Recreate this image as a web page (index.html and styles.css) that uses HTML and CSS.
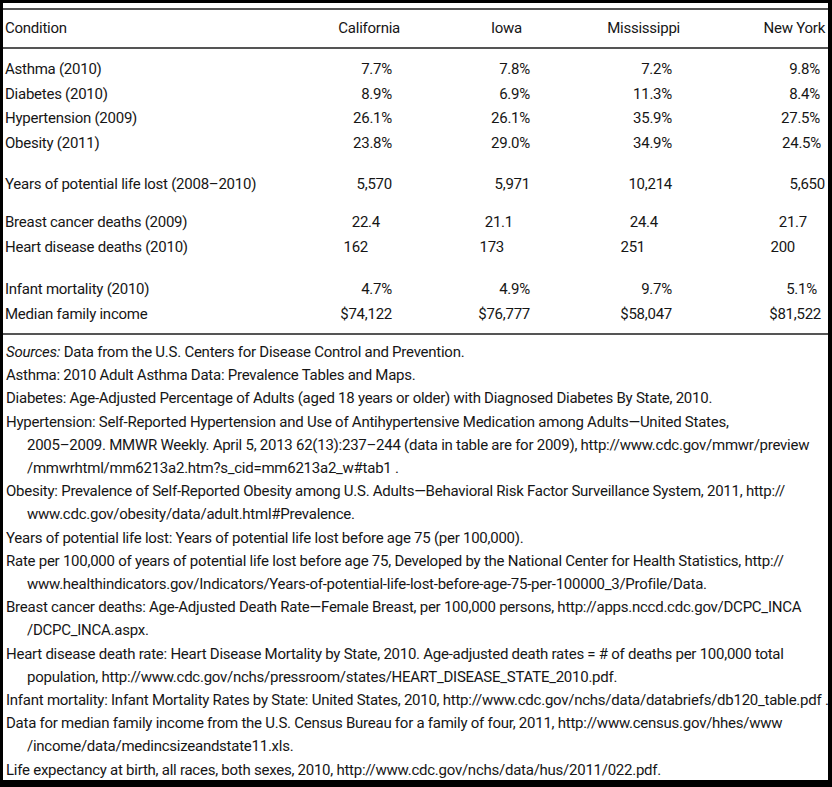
FILE: index.html
```html
<!DOCTYPE html>
<html>
<head>
<meta charset="utf-8">
<link rel="stylesheet" href="styles.css">
</head>
<body>
<div class="frame">
  <div class="table">
    <div class="row head">
      <div class="lab">Condition</div>
      <div class="val">California</div>
      <div class="val pr8">Iowa</div>
      <div class="val">Mississippi</div>
      <div class="val">New York</div>
    </div>
    <div class="body">
      <div class="row">
        <div class="lab">Asthma (2010)</div>
        <div class="val pr8">7.7%</div><div class="val">7.8%</div><div class="val pr8">7.2%</div><div class="val pr5">9.8%</div>
      </div>
      <div class="row">
        <div class="lab">Diabetes (2010)</div>
        <div class="val pr8">8.9%</div><div class="val">6.9%</div><div class="val pr8">11.3%</div><div class="val pr5">8.4%</div>
      </div>
      <div class="row">
        <div class="lab">Hypertension (2009)</div>
        <div class="val pr8">26.1%</div><div class="val">26.1%</div><div class="val pr8">35.9%</div><div class="val pr5">27.5%</div>
      </div>
      <div class="row">
        <div class="lab">Obesity (2011)</div>
        <div class="val pr8">23.8%</div><div class="val">29.0%</div><div class="val pr8">34.9%</div><div class="val pr4">24.5%</div>
      </div>
      <div class="row gap-a">
        <div class="lab">Years of potential life lost (2008–2010)</div>
        <div class="val pr8">5,570</div><div class="val">5,971</div><div class="val pr8">10,214</div><div class="val">5,650</div>
      </div>
      <div class="row gap-b">
        <div class="lab">Breast cancer deaths (2009)</div>
        <div class="val pr20">22.4</div><div class="val pr17">21.1</div><div class="val pr22">24.4</div><div class="val pr18">21.7</div>
      </div>
      <div class="row">
        <div class="lab">Heart disease deaths (2010)</div>
        <div class="val pr32">162</div><div class="val pr26">173</div><div class="val pr35">251</div><div class="val pr30">200</div>
      </div>
      <div class="row gap-c">
        <div class="lab">Infant mortality (2010)</div>
        <div class="val pr8">4.7%</div><div class="val">4.9%</div><div class="val pr8">9.7%</div><div class="val pr8">5.1%</div>
      </div>
      <div class="row">
        <div class="lab">Median family income</div>
        <div class="val pr8">$74,122</div><div class="val">$76,777</div><div class="val pr8">$58,047</div><div class="val pr4">$81,522</div>
      </div>
    </div>
  </div>
  <div class="notes">
    <div class="note"><i>Sources:</i> Data from the U.S. Centers for Disease Control and Prevention.</div>
    <div class="note">Asthma: 2010 Adult Asthma Data: Prevalence Tables and Maps.</div>
    <div class="note">Diabetes: Age-Adjusted Percentage of Adults (aged 18 years or older) with Diagnosed Diabetes By State, 2010.</div>
    <div class="note">Hypertension: Self-Reported Hypertension and Use of Antihypertensive Medication among Adults—United States,<br>2005–2009. MMWR Weekly. April 5, 2013 62(13):237–244 (data in table are for 2009), http://www.cdc.gov/mmwr/preview<br>/mmwrhtml/mm6213a2.htm?s_cid=mm6213a2_w#tab1 .</div>
    <div class="note">Obesity: Prevalence of Self-Reported Obesity among U.S. Adults—Behavioral Risk Factor Surveillance System, 2011, http://<br>www.cdc.gov/obesity/data/adult.html#Prevalence.</div>
    <div class="note">Years of potential life lost: Years of potential life lost before age 75 (per 100,000).</div>
    <div class="note">Rate per 100,000 of years of potential life lost before age 75, Developed by the National Center for Health Statistics, http://<br>www.healthindicators.gov/Indicators/Years-of-potential-life-lost-before-age-75-per-100000_3/Profile/Data.</div>
    <div class="note">Breast cancer deaths: Age-Adjusted Death Rate—Female Breast, per 100,000 persons, http://apps.nccd.cdc.gov/DCPC_INCA<br>/DCPC_INCA.aspx.</div>
    <div class="note">Heart disease death rate: Heart Disease Mortality by State, 2010. Age-adjusted death rates = # of deaths per 100,000 total<br>population, http://www.cdc.gov/nchs/pressroom/states/HEART_DISEASE_STATE_2010.pdf.</div>
    <div class="note">Infant mortality: Infant Mortality Rates by State: United States, 2010, http://www.cdc.gov/nchs/data/databriefs/db120_table.pdf .</div>
    <div class="note">Data for median family income from the U.S. Census Bureau for a family of four, 2011, http://www.census.gov/hhes/www<br>/income/data/medincsizeandstate11.xls.</div>
    <div class="note">Life expectancy at birth, all races, both sexes, 2010, http://www.cdc.gov/nchs/data/hus/2011/022.pdf.</div>
  </div>
</div>
</body>
</html>
```
FILE: styles.css
```css
html, body {
  margin: 0;
  padding: 0;
}
body {
  background: #000;
  width: 832px;
  height: 787px;
  overflow: hidden;
  font-family: Roboto, "DejaVu Sans Condensed", "Liberation Sans", sans-serif;
  font-size: 15px;
  letter-spacing: -0.25px;
  color: #161616;
}
.frame {
  background: #fff;
  margin: 3px 4px 0 3px;
  height: 777px;
  overflow: hidden;
}
.table {
  margin-top: 5px;
  border-top: 2px solid #555;
  border-bottom: 2px solid #555;
}
.row {
  display: grid;
  grid-template-columns: 275px 120px 130px 150px 145px;
  padding: 0 3px 0 2px;
  line-height: 24.5px;
  white-space: nowrap;
}
.head {
  line-height: 37px;
  border-bottom: 2px solid #555;
}
.body {
  padding: 8px 0 7px;
}
.val { text-align: right; }
.gap-a { margin-top: 17px; }
.gap-b { margin-top: 13.5px; }
.gap-c { margin-top: 18px; }
.pr4 { padding-right: 4px; }
.pr5 { padding-right: 5px; }
.pr8 { padding-right: 8px; }
.pr17 { padding-right: 17px; }
.pr18 { padding-right: 18px; }
.pr20 { padding-right: 20px; }
.pr22 { padding-right: 22px; }
.pr26 { padding-right: 26px; }
.pr30 { padding-right: 30px; }
.pr32 { padding-right: 32px; }
.pr35 { padding-right: 35px; }
.notes {
  padding: 6px 0 0 2px;
  line-height: 23.2px;
  white-space: nowrap;
}
.note {
  padding-left: 22px;
  text-indent: -21px;
}
```
